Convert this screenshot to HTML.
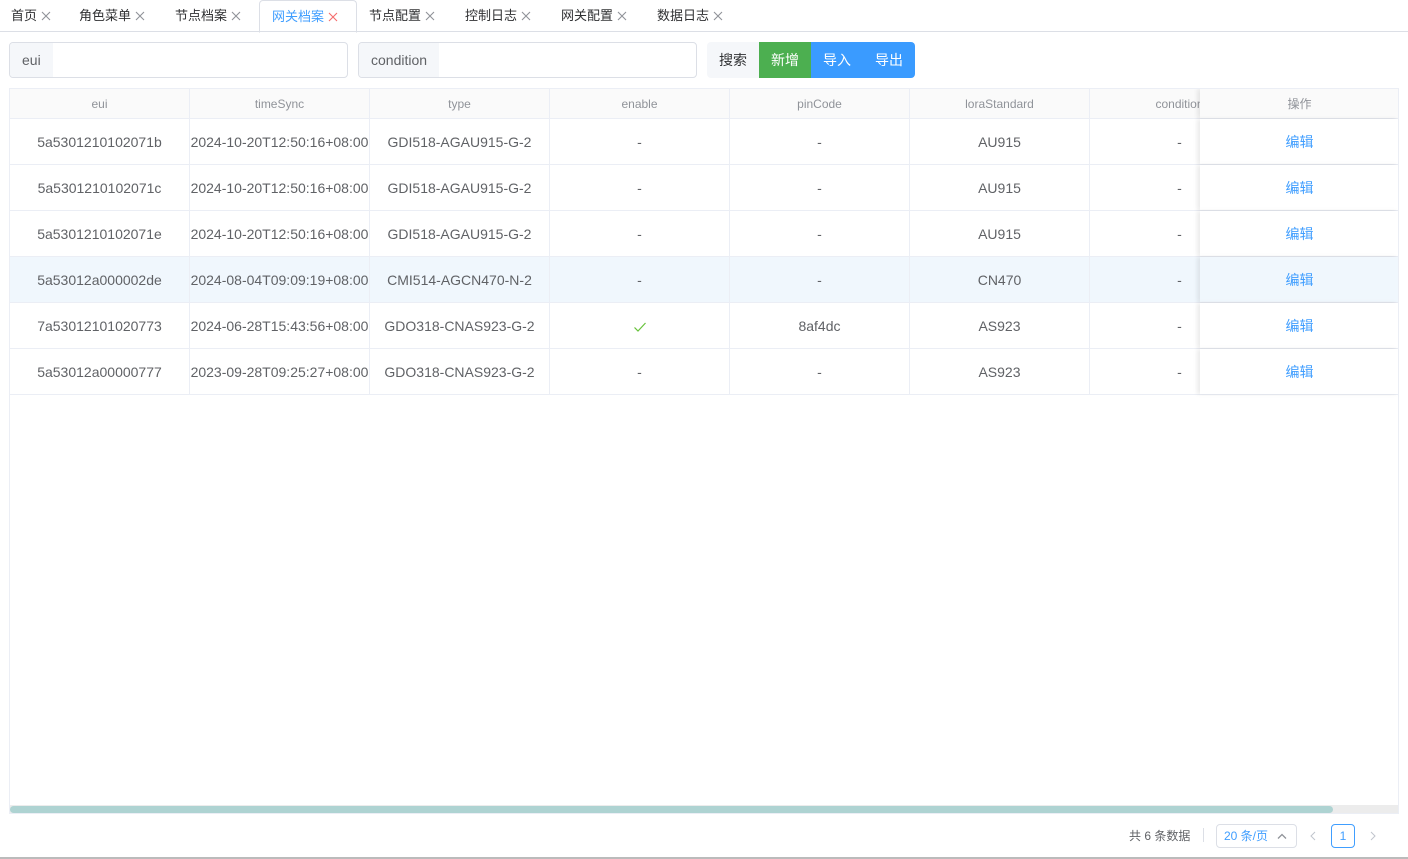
<!DOCTYPE html>
<html><head><meta charset="utf-8"><style>
*{box-sizing:border-box;margin:0;padding:0}
body{width:1408px;height:859px;background:#fff;font-family:"Liberation Sans","Noto Sans CJK SC",sans-serif;font-size:14px;color:#606266;position:relative;overflow:hidden}
.tabs{position:absolute;left:0;top:0;width:1408px;height:32px;border-bottom:1px solid #dcdfe6}
.tab{position:absolute;top:0;height:32px;line-height:31px;font-size:13px;color:#303133}
.tab svg{vertical-align:-1px;margin-left:4px}
.tab.act{border:1px solid #dcdfe6;border-bottom:1px solid #fff;border-radius:4px 4px 0 0;color:#409eff;padding:0 12px;height:33px;width:98px}
.inp{position:absolute;top:42px;height:36px;border:1px solid #dcdfe6;border-radius:4px;overflow:hidden;background:#fff}
.inp .lab{height:100%;background:#f5f7fa;color:#606266;padding:0 12px;line-height:34px;float:left}
.btns{position:absolute;left:707px;top:42px;width:208px;height:36px;border-radius:4px;overflow:hidden;display:flex}
.btns div{line-height:36px;width:52px;text-align:center;font-size:14px;color:#fff}
.tbl{position:absolute;left:9px;top:88px;width:1390px;height:726px;border:1px solid #ebeef5;overflow:hidden}
.row{position:absolute;left:0;width:1389px;height:46px;border-bottom:1px solid #ebeef5;background:#fff}
.hd{height:30px;background:#fafafa;top:0}
.c{position:absolute;top:0;height:100%;border-right:1px solid #ebeef5;text-align:center;line-height:47px;white-space:nowrap;overflow:hidden;font-size:14px;color:#606266}
.hd .c{line-height:30px;font-size:12px;color:#909399}
.op{position:absolute;left:1190px;top:0;width:199px;height:45px;text-align:center;line-height:47px;color:#409eff;box-shadow:-3px 0 4px rgba(0,0,0,.08);background:inherit}
.hd .op{line-height:30px;height:29px;font-size:12px;color:#909399}
</style></head><body>
<div class="tabs">
<div class="tab" style="left:11px">首页<svg width="10" height="10" viewBox="0 0 10 10"><path d="M1 1l8 8M9 1l-8 8" stroke="#909399" stroke-width="1.1"/></svg></div>
<div class="tab" style="left:79px">角色菜单<svg width="10" height="10" viewBox="0 0 10 10"><path d="M1 1l8 8M9 1l-8 8" stroke="#909399" stroke-width="1.1"/></svg></div>
<div class="tab" style="left:175px">节点档案<svg width="10" height="10" viewBox="0 0 10 10"><path d="M1 1l8 8M9 1l-8 8" stroke="#909399" stroke-width="1.1"/></svg></div>
<div class="tab act" style="left:259px">网关档案<svg width="10" height="10" viewBox="0 0 10 10"><path d="M1 1l8 8M9 1l-8 8" stroke="#f56c6c" stroke-width="1.1"/></svg></div>
<div class="tab" style="left:369px">节点配置<svg width="10" height="10" viewBox="0 0 10 10"><path d="M1 1l8 8M9 1l-8 8" stroke="#909399" stroke-width="1.1"/></svg></div>
<div class="tab" style="left:465px">控制日志<svg width="10" height="10" viewBox="0 0 10 10"><path d="M1 1l8 8M9 1l-8 8" stroke="#909399" stroke-width="1.1"/></svg></div>
<div class="tab" style="left:561px">网关配置<svg width="10" height="10" viewBox="0 0 10 10"><path d="M1 1l8 8M9 1l-8 8" stroke="#909399" stroke-width="1.1"/></svg></div>
<div class="tab" style="left:657px">数据日志<svg width="10" height="10" viewBox="0 0 10 10"><path d="M1 1l8 8M9 1l-8 8" stroke="#909399" stroke-width="1.1"/></svg></div>
</div>
<div class="inp" style="left:9px;width:339px"><div class="lab">eui</div></div>
<div class="inp" style="left:358px;width:339px"><div class="lab">condition</div></div>
<div class="btns"><div style="background:#f5f7fa;color:#303133">搜索</div><div style="background:#4caf50">新增</div><div style="background:#3a9bff">导入</div><div style="background:#3a9bff">导出</div></div>
<div class="tbl">
<div class="row hd"><div class="c" style="left:0;width:180px">eui</div><div class="c" style="left:180px;width:180px">timeSync</div><div class="c" style="left:360px;width:180px">type</div><div class="c" style="left:540px;width:180px">enable</div><div class="c" style="left:720px;width:180px">pinCode</div><div class="c" style="left:900px;width:180px">loraStandard</div><div class="c" style="left:1080px;width:180px">condition</div><div class="op">操作</div></div>
<div class="row" style="top:30px"><div class="c" style="left:0;width:180px">5a5301210102071b</div><div class="c" style="left:180px;width:180px">2024-10-20T12:50:16+08:00</div><div class="c" style="left:360px;width:180px">GDI518-AGAU915-G-2</div><div class="c" style="left:540px;width:180px">-</div><div class="c" style="left:720px;width:180px">-</div><div class="c" style="left:900px;width:180px">AU915</div><div class="c" style="left:1080px;width:180px">-</div><div class="op">编辑</div></div>
<div class="row" style="top:76px"><div class="c" style="left:0;width:180px">5a5301210102071c</div><div class="c" style="left:180px;width:180px">2024-10-20T12:50:16+08:00</div><div class="c" style="left:360px;width:180px">GDI518-AGAU915-G-2</div><div class="c" style="left:540px;width:180px">-</div><div class="c" style="left:720px;width:180px">-</div><div class="c" style="left:900px;width:180px">AU915</div><div class="c" style="left:1080px;width:180px">-</div><div class="op">编辑</div></div>
<div class="row" style="top:122px"><div class="c" style="left:0;width:180px">5a5301210102071e</div><div class="c" style="left:180px;width:180px">2024-10-20T12:50:16+08:00</div><div class="c" style="left:360px;width:180px">GDI518-AGAU915-G-2</div><div class="c" style="left:540px;width:180px">-</div><div class="c" style="left:720px;width:180px">-</div><div class="c" style="left:900px;width:180px">AU915</div><div class="c" style="left:1080px;width:180px">-</div><div class="op">编辑</div></div>
<div class="row" style="top:168px;background:#f0f7fd"><div class="c" style="left:0;width:180px">5a53012a000002de</div><div class="c" style="left:180px;width:180px">2024-08-04T09:09:19+08:00</div><div class="c" style="left:360px;width:180px">CMI514-AGCN470-N-2</div><div class="c" style="left:540px;width:180px">-</div><div class="c" style="left:720px;width:180px">-</div><div class="c" style="left:900px;width:180px">CN470</div><div class="c" style="left:1080px;width:180px">-</div><div class="op">编辑</div></div>
<div class="row" style="top:214px"><div class="c" style="left:0;width:180px">7a53012101020773</div><div class="c" style="left:180px;width:180px">2024-06-28T15:43:56+08:00</div><div class="c" style="left:360px;width:180px">GDO318-CNAS923-G-2</div><div class="c" style="left:540px;width:180px"><svg width="14" height="14" viewBox="0 0 14 14" style="vertical-align:middle"><path d="M1.5 7.5l3.5 3.5 7.5-8" fill="none" stroke="#67c23a" stroke-width="1.2"/></svg></div><div class="c" style="left:720px;width:180px">8af4dc</div><div class="c" style="left:900px;width:180px">AS923</div><div class="c" style="left:1080px;width:180px">-</div><div class="op">编辑</div></div>
<div class="row" style="top:260px"><div class="c" style="left:0;width:180px">5a53012a00000777</div><div class="c" style="left:180px;width:180px">2023-09-28T09:25:27+08:00</div><div class="c" style="left:360px;width:180px">GDO318-CNAS923-G-2</div><div class="c" style="left:540px;width:180px">-</div><div class="c" style="left:720px;width:180px">-</div><div class="c" style="left:900px;width:180px">AS923</div><div class="c" style="left:1080px;width:180px">-</div><div class="op">编辑</div></div>
<div style="position:absolute;left:0;top:716px;width:1389px;height:8px;background:#ececec"></div>
<div style="position:absolute;left:0;top:717px;width:1323px;height:7px;background:#aed3d2;border-radius:4px"></div>
</div>
<div style="position:absolute;left:1129px;top:827px;font-size:12px;color:#606266">共 6 条数据</div>
<div style="position:absolute;left:1203px;top:828px;width:1px;height:14px;background:#dcdfe6"></div>
<div style="position:absolute;left:1216px;top:824px;width:81px;height:24px;border:1px solid #dcdfe6;border-radius:4px;font-size:12px;color:#409eff;line-height:22px;padding-left:7px">20 条/页<svg style="position:absolute;right:9px;top:8px" width="10" height="6" viewBox="0 0 10 6"><path d="M1 5.5l4-4 4 4" fill="none" stroke="#909399" stroke-width="1.3"/></svg></div>
<svg style="position:absolute;left:1310px;top:831px" width="6" height="10" viewBox="0 0 6 10"><path d="M5 1l-4 4 4 4" fill="none" stroke="#c0c4cc" stroke-width="1"/></svg>
<div style="position:absolute;left:1331px;top:824px;width:24px;height:24px;border:1px solid #409eff;border-radius:4px;color:#409eff;font-size:12px;text-align:center;line-height:22px">1</div>
<svg style="position:absolute;left:1370px;top:831px" width="6" height="10" viewBox="0 0 6 10"><path d="M1 1l4 4-4 4" fill="none" stroke="#c0c4cc" stroke-width="1"/></svg>
<div style="position:absolute;left:0;top:857px;width:1408px;height:2px;background:#bbb"></div>
</body></html>
